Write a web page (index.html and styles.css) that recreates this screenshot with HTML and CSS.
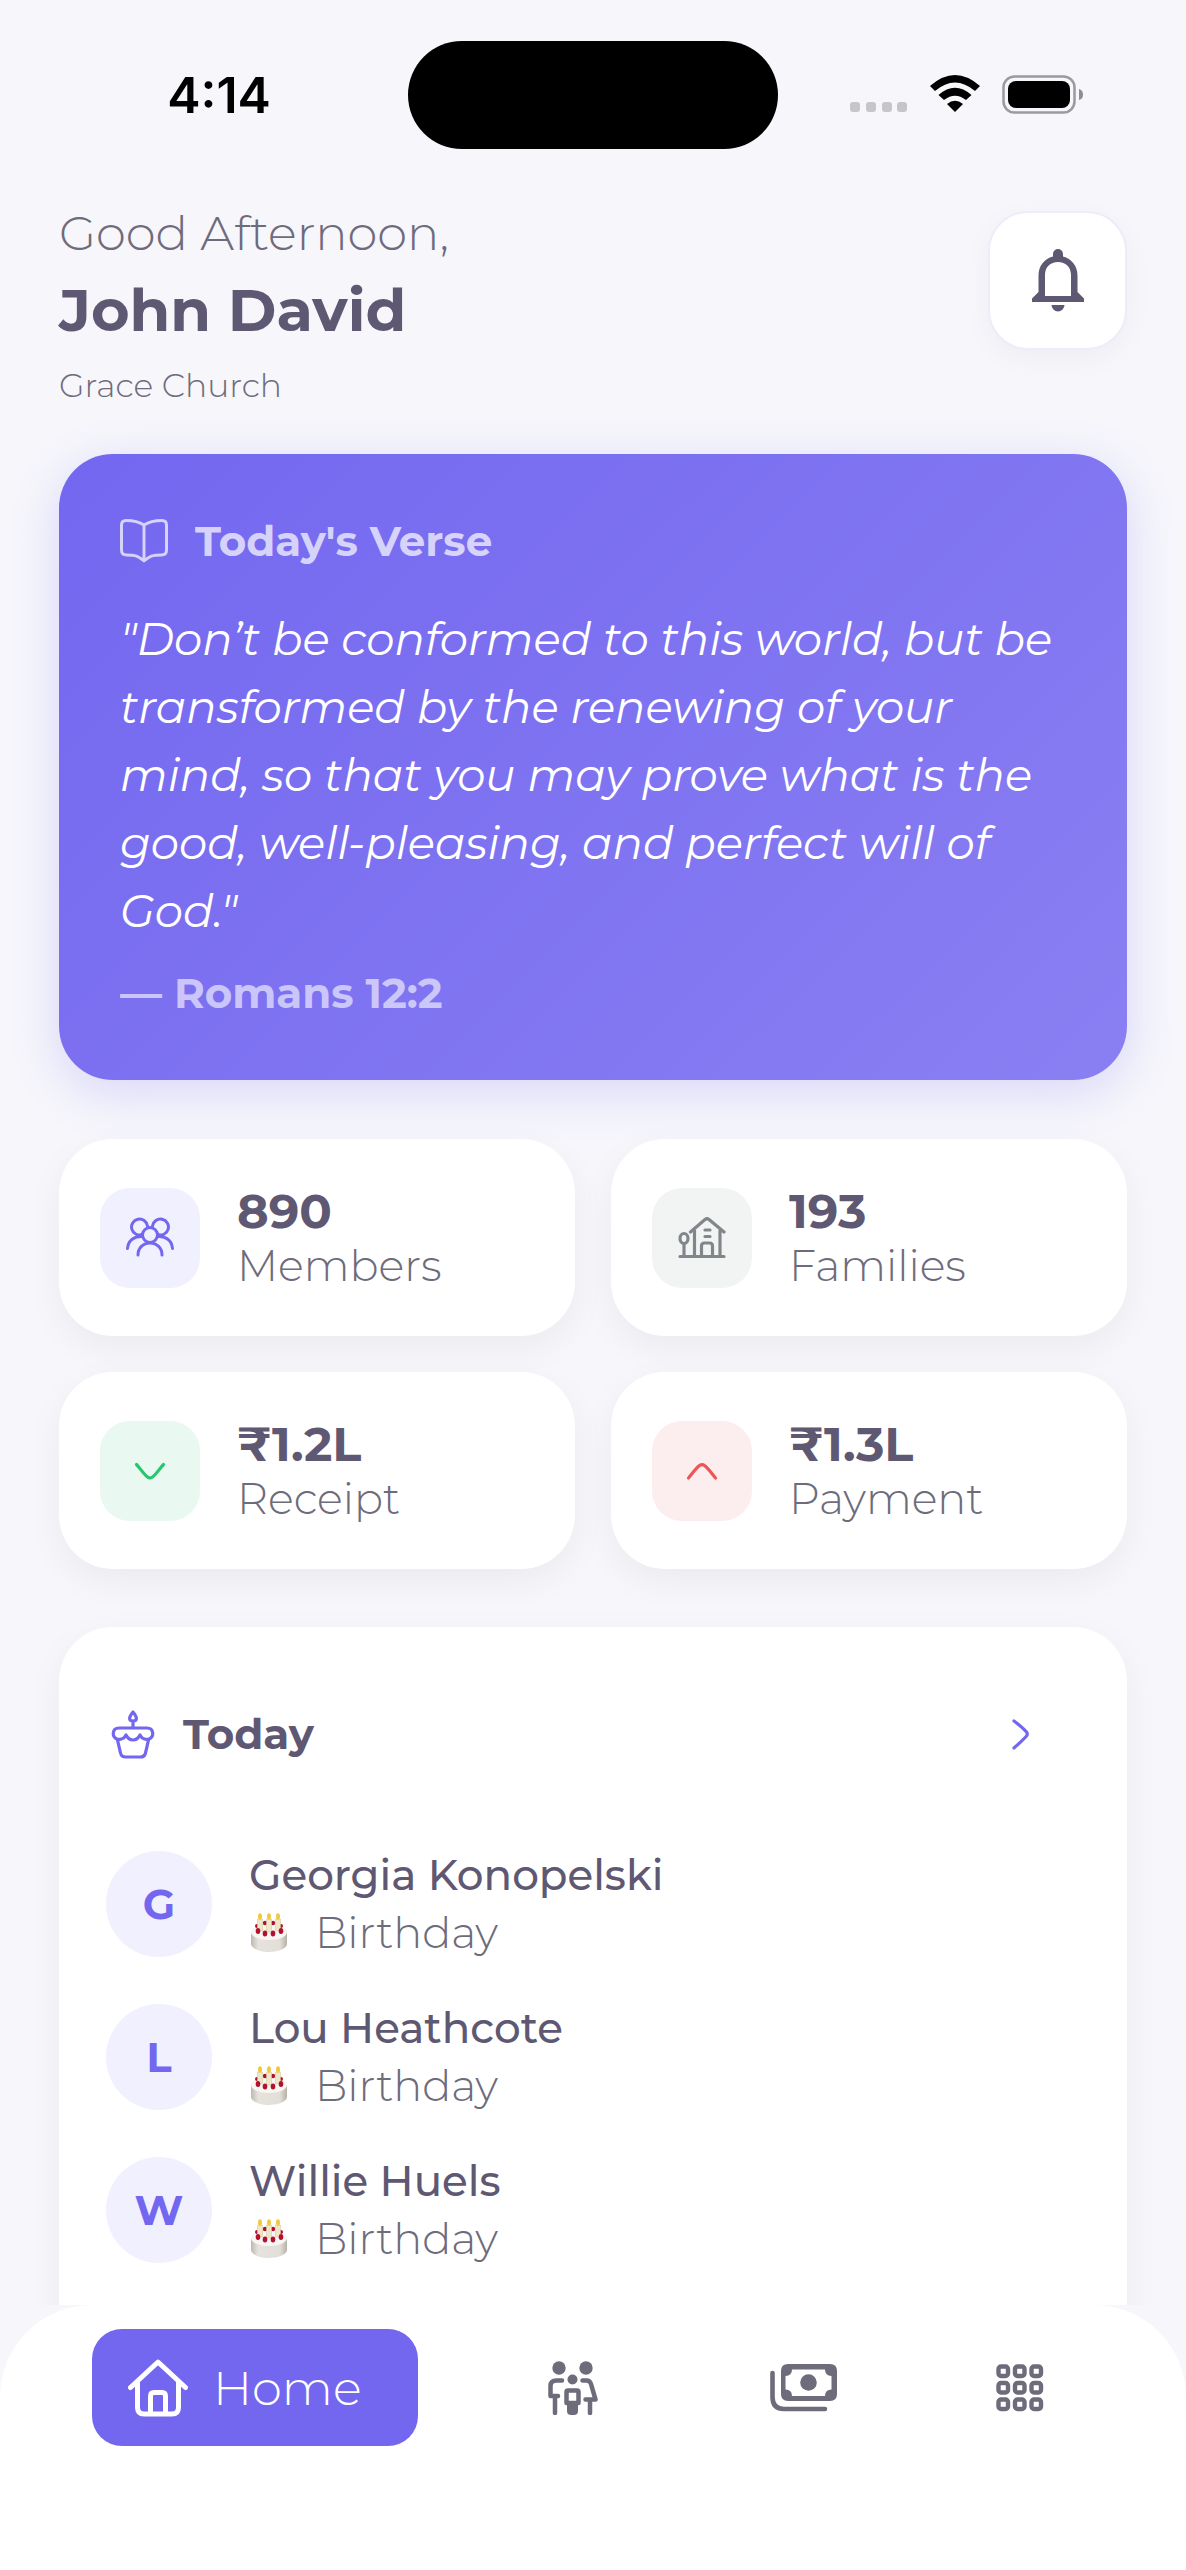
FILE: index.html
```html
<!DOCTYPE html>
<html lang="en">
<head>
<meta charset="utf-8">
<meta name="viewport" content="width=device-width, initial-scale=1">
<title>Grace Church</title>
<link rel="stylesheet" href="styles.css">
</head>
<body>
<svg class="defs" aria-hidden="true">
  <defs>
    <linearGradient id="cake-side" x1="0" x2="1" y1="0" y2="0">
      <stop offset="0" stop-color="#bdb9b0"/><stop offset=".2" stop-color="#e6e3dd"/><stop offset=".8" stop-color="#e2dfd8"/><stop offset="1" stop-color="#b5b1a8"/>
    </linearGradient>
    <symbol id="cake" viewBox="0 0 40 40">
      <path d="M2 19v12c0 4 8 8 18 8s18-4 18-8V19z" fill="url(#cake-side)"/>
      <ellipse cx="20" cy="19" rx="18" ry="8" fill="#f7f6f3"/>
      <g fill="#b3122f"><circle cx="8" cy="13" r="2"/><circle cx="16" cy="10" r="2.200"/><circle cx="24" cy="10" r="2.200"/><circle cx="32" cy="13" r="2"/></g>
      <g fill="#eee6c8" stroke="#cfc59d" stroke-width=".5"><path d="M8.500 6h5v12h-5zM17.500 6h5v13h-5zM26.500 6h5v12h-5z"/></g>
      <g fill="#b3122f"><ellipse cx="9" cy="18" rx="2.300" ry="3"/><ellipse cx="16" cy="20.500" rx="2.300" ry="3"/><ellipse cx="24" cy="20.500" rx="2.300" ry="3"/><ellipse cx="32" cy="18" rx="2.300" ry="3"/></g>
      <g fill="#f2c83c"><ellipse cx="11" cy="3.500" rx="2" ry="3.200"/><ellipse cx="20" cy="3.500" rx="2" ry="3.200"/><ellipse cx="29" cy="3.500" rx="2" ry="3.200"/></g>
    </symbol>
  </defs>
</svg>

<div class="app">
  <main class="screen">
    <div class="status">
      <span class="status-time">4:14</span>
      <span class="island"></span>
      <div class="status-icons">
        <svg class="i-dots" viewBox="0 0 58 38" aria-hidden="true"><g fill="#c6c6c9"><rect y="27" width="10" height="10" rx="3"/><rect x="16" y="27" width="10" height="10" rx="3"/><rect x="32" y="27" width="10" height="10" rx="3"/><rect x="47" y="27" width="10" height="10" rx="3"/></g></svg>
        <svg class="i-wifi" viewBox="0 0 50 38" aria-hidden="true"><path d="M0 11Q25-11 50 11L45 16Q25-1 5 16ZM8.500 20Q25 5.500 41.500 20L36 25Q25 16.500 14 25ZM17 29Q25 22.500 33 29L25 37Z"/></svg>
        <svg class="i-battery" viewBox="0 0 82 40" aria-hidden="true"><rect x="1.500" y="1.500" width="71" height="36" rx="11" fill="none" stroke="#9b9b9e" stroke-width="2.500"/><rect x="6" y="6" width="62" height="27" rx="8"/><path d="M77 14q4 1 4 5.500t-4 5.500z" fill="#8e8e91"/></svg>
      </div>
    </div>

    <header class="header">
      <div>
        <p class="greeting">Good Afternoon,</p>
        <h1 class="name">John David</h1>
        <p class="church">Grace Church</p>
      </div>
      <button class="bell" type="button" aria-label="Notifications">
        <svg viewBox="0 0 52 63" aria-hidden="true"><path fill-rule="evenodd" fill="#5e5873" d="M26 0a5 5 0 0 1 5 5v2.500C39.500 9.500 45.500 17 45.500 26.500V43L52 49.500V53H0v-3.500L6.500 43V26.500C6.500 17 12.500 9.500 21 7.500V5a5 5 0 0 1 5-5zM13 47h26V26c0-8-5.500-13-13-13s-13 5-13 13zM19.500 56h13a6.500 6.500 0 0 1-13 0z"/></svg>
      </button>
    </header>

    <section class="verse">
      <h2 class="verse-title">
        <svg viewBox="0 0 48 44" fill="none" stroke="#fff" stroke-width="3" stroke-linejoin="round" aria-hidden="true"><path d="M24 6C18 2 12 1.500 6 1.500Q1.500 1.500 1.500 6v25q0 5 5 5c9 0 12 1 17.500 6 5.500-5 8.500-6 17.500-6q5 0 5-5V6q0-4.500-4.500-4.500c-6 0-12 .5-18 4.500zV42"/></svg>
        Today's Verse
      </h2>
      <blockquote class="verse-text">"Don’t be conformed to this world, but be transformed by the renewing of your mind, so that you may prove what is the good, well-pleasing, and perfect will of God."</blockquote>
      <p class="verse-ref">— Romans 12:2</p>
    </section>

    <section class="stats" aria-label="Summary">
      <article class="stat">
        <span class="tile tile-members"><svg viewBox="0 0 48 48" fill="none" stroke="#7367f0" stroke-width="3" stroke-linecap="round" aria-hidden="true"><circle cx="24" cy="21" r="7.500"/><path d="M12 41c0-7 5-12 12-12s12 5 12 12M16.500 20.500A8 8 0 1 1 21.500 12M31.500 20.500A8 8 0 1 0 26.500 12M15.500 22.500C7.500 22 2 27.500 1.500 34.500M32.500 22.500C40.500 22 46 27.500 46.500 34.500"/></svg></span>
        <div><p class="stat-value">890</p><p class="stat-label">Members</p></div>
      </article>
      <article class="stat">
        <span class="tile tile-families"><svg viewBox="0 0 48 48" fill="none" stroke="#82868b" stroke-width="3.200" stroke-linecap="round" stroke-linejoin="round" aria-hidden="true"><path d="M2 42.500h44M16.500 42V16M42 42V16M12.500 18L27 5.500q2-1.500 4 0L46 18M23.500 42V32q0-3 3-3h5q3 0 3 3v10M27 16h5M27 22.500h5M6 42V30"/><ellipse cx="6" cy="24.500" rx="4" ry="5"/></svg></span>
        <div><p class="stat-value">193</p><p class="stat-label">Families</p></div>
      </article>
      <article class="stat">
        <span class="tile tile-receipt"><svg viewBox="0 0 48 48" fill="none" stroke="#28c76f" stroke-width="3.200" stroke-linecap="round" aria-hidden="true"><path d="M10.500 17.500C14 21 17.500 27 21.500 30q2.500 1.800 5 0c4-3 7.500-9 11-12.500"/></svg></span>
        <div><p class="stat-value">₹1.2L</p><p class="stat-label">Receipt</p></div>
      </article>
      <article class="stat">
        <span class="tile tile-payment"><svg viewBox="0 0 48 48" fill="none" stroke="#f05455" stroke-width="3.200" stroke-linecap="round" aria-hidden="true"><path d="M10.500 31C14 27 17.500 21.500 21.500 18.500q2.500-1.800 5 0c4 3 7.500 8.500 11 12.500"/></svg></span>
        <div><p class="stat-value">₹1.3L</p><p class="stat-label">Payment</p></div>
      </article>
    </section>

    <section class="today">
      <div class="today-head">
        <svg viewBox="0 0 54 54" fill="none" stroke="#7367f0" stroke-width="3.200" stroke-linecap="round" stroke-linejoin="round" aria-hidden="true"><path d="M27 5c4.500 5.500 4.500 8.500 0 9-4.500-.5-4.500-3.500 0-9zM27 15v6M13 21h28c7 0 7.500 9 2 11-3 1-7 0-9-4-2 4-4 5-7 5s-5-1-7-5c-2 4-6 5-9 4-5.500-2-5-11 2-11zM11.500 33l3 13q1 4 5 4h15q4 0 5-4l3-13"/></svg>
        <h2 class="today-title">Today</h2>
        <button class="more" type="button" aria-label="View all">
          <svg viewBox="0 0 54 54" fill="none" stroke="#7367f0" stroke-width="3.200" stroke-linecap="round" aria-hidden="true"><path d="M20 14C24 17 29 21 32.500 25q1.500 2 0 4C29 33 24 37.500 20 41"/></svg>
        </button>
      </div>
      <ul class="people">
        <li class="person"><span class="avatar">G</span><div><p class="person-name">Georgia Konopelski</p><p class="event"><svg aria-hidden="true"><use href="#cake"/></svg>Birthday</p></div></li>
        <li class="person"><span class="avatar">L</span><div><p class="person-name">Lou Heathcote</p><p class="event"><svg aria-hidden="true"><use href="#cake"/></svg>Birthday</p></div></li>
        <li class="person"><span class="avatar">W</span><div><p class="person-name">Willie Huels</p><p class="event"><svg aria-hidden="true"><use href="#cake"/></svg>Birthday</p></div></li>
      </ul>
    </section>
  </main>

  <nav class="tabs" aria-label="Main">
    <a class="tab tab-active" href="#home" aria-current="page">
      <svg class="i-home" viewBox="0 0 60 58" fill="none" stroke="#fff" stroke-width="5" stroke-linecap="round" stroke-linejoin="round" aria-hidden="true"><path d="M2.500 28.500L30 3l27.500 25.500M9.500 24v24.500q0 6.500 6.500 6.500h28q6.500 0 6.500-6.500V24M22.500 55V37q0-3.500 3.500-3.500h8q3.500 0 3.500 3.500v18"/></svg>
      Home
    </a>
    <a class="tab" href="#families" aria-label="Families">
      <svg class="i-family" viewBox="0 0 50 54" fill="none" stroke="#6e6b7b" stroke-width="4.500" stroke-linecap="round" stroke-linejoin="round" aria-hidden="true"><g fill="#6e6b7b" stroke="none"><circle cx="11" cy="7" r="6.700"/><circle cx="38" cy="7" r="6.700"/><circle cx="24.500" cy="18.500" r="5"/><path d="M19 42h11v8q0 4-4 4h-3q-4 0-4-4z"/></g><path d="M14 19.500H8.500Q2.500 19.500 2.500 25v10H10M7 36v16M34.500 19.500h4Q42 19.500 43 23l4.500 15.500H37.500M42 39v13M20 29.500h9q1.500 0 1.500 1.500v11h-12V31q0-1.500 1.500-1.500z"/></svg>
    </a>
    <a class="tab" href="#finance" aria-label="Finance">
      <svg class="i-money" viewBox="0 0 67 48" aria-hidden="true"><path d="M2.500 9v24Q2.500 45 14 45h41" fill="none" stroke="#6e6b7b" stroke-width="4.600" stroke-linecap="round"/><path fill-rule="evenodd" fill="#6e6b7b" d="M18 0h42q7 0 7 7v23q0 7-7 7H18q-7 0-7-7V7q0-7 7-7zM22 5.500q0 6.500-6.500 6.500v13.500q6.500 0 6.500 6.500h33q0-6.500 6.500-6.500V12q-6.500 0-6.500-6.500z"/><circle cx="38.500" cy="18.500" r="8.300" fill="#6e6b7b"/></svg>
    </a>
    <a class="tab" href="#more" aria-label="More">
      <svg class="i-grid" viewBox="0 0 48 48" fill="none" stroke="#6e6b7b" stroke-width="4.400" aria-hidden="true"><g id="grid-row"><rect x="2.500" y="2.500" width="9.500" height="9.500" rx="2.500"/><rect x="19" y="2.500" width="9.500" height="9.500" rx="2.500"/><rect x="35.500" y="2.500" width="9.500" height="9.500" rx="2.500"/></g><use href="#grid-row" y="16.500"/><use href="#grid-row" y="33"/></svg>
    </a>
  </nav>
</div>
</body>
</html>
```
FILE: styles.css
```css
* { box-sizing: border-box; }

body {
  margin: 0;
  background: #f6f6fb;
  color: #5e5873;
  font-family: Montserrat, Inter, "Noto Sans", sans-serif;
  font-size: 42px;
}

h1, h2, p, ul, blockquote { margin: 0; padding: 0; font-weight: inherit; }
button { border: 0; padding: 0; background: none; cursor: pointer; }
svg { display: block; flex: none; }
.defs { position: absolute; width: 0; height: 0; }

.app {
  display: flex;
  flex-direction: column;
  height: 100vh;
}

.screen {
  flex: 1;
  min-height: 0;
  overflow-y: auto;
  scrollbar-width: none;
  padding: 0 59px;
}

/* Status bar */
.status {
  display: grid;
  grid-template-columns: 1fr 370px 1fr;
  align-items: center;
  margin: 0 -59px;
  padding: 41px 30px 54px;
}
.status-time {
  justify-self: center;
  color: #000;
  font-family: Inter, sans-serif;
  font-size: 50px;
  font-weight: 600;
}
.island { height: 108px; border-radius: 54px; background: #000; }
.status-icons {
  display: flex;
  justify-content: center;
  gap: 22px;
}
.i-dots { width: 58px; height: 38px; }
.i-wifi { width: 50px; height: 38px; }
.i-battery { width: 82px; height: 40px; }

/* Greeting */
.header {
  display: flex;
  align-items: flex-start;
  justify-content: space-between;
  margin-bottom: 41px;
}
.greeting { font-size: 48px; line-height: 60px; font-weight: 300; color: #6e6b7b; }
.name { font-size: 59px; line-height: 94px; font-weight: 700; }
.church { font-size: 33px; line-height: 56px; font-weight: 300; color: #6e6b7b; }
.bell {
  display: grid;
  place-items: center;
  width: 139px;
  height: 139px;
  margin-top: 8px;
  border: 2px solid #ebedfa;
  border-radius: 40px;
  background: #fff;
  box-shadow: 0 8px 30px rgba(0, 0, 0, .04);
}
.bell svg { width: 52px; height: 63px; }

/* Verse of the day */
.verse {
  margin-bottom: 59px;
  padding: 61px;
  border-radius: 54px;
  background: linear-gradient(135deg, #7367f0, #8a7ff2);
  box-shadow: 0 12px 48px rgba(115, 103, 240, .22);
  color: #fff;
}
.verse-title {
  display: flex;
  align-items: center;
  gap: 27px;
  font-size: 42px;
  line-height: 52px;
  font-weight: 700;
  opacity: .7;
}
.verse-title svg { width: 48px; height: 44px; }
.verse-text {
  margin: 38px 0 22px;
  font-size: 45px;
  line-height: 68px;
  font-weight: 400;
  font-style: italic;
}
.verse-ref { line-height: 52px; font-weight: 700; opacity: .6; }

/* Summary cards */
.stats {
  display: grid;
  grid-template-columns: 1fr 1fr;
  gap: 36px;
  margin-bottom: 58px;
}
.stat {
  display: flex;
  align-items: center;
  gap: 37px;
  min-height: 197px;
  padding: 0 41px;
  border-radius: 54px;
  background: #fff;
  box-shadow: 0 12px 36px rgba(0, 0, 0, .05);
}
.tile {
  display: grid;
  place-items: center;
  width: 100px;
  height: 100px;
  border-radius: 30px;
}
.tile svg { width: 48px; height: 48px; }
.tile-members { background: #f1f0fe; }
.tile-families { background: #f2f4f4; }
.tile-receipt { background: #e9f8f1; }
.tile-payment { background: #fceeee; }
.stat-value { font-size: 48px; line-height: 56px; font-weight: 700; }
.stat-label { font-size: 43px; line-height: 54px; font-weight: 300; color: #6e6b7b; }

/* Today's events */
.today {
  padding: 57px 47px 118px;
  border-radius: 54px;
  background: #fff;
  box-shadow: 0 12px 36px rgba(0, 0, 0, .05);
}
.today-head {
  display: flex;
  align-items: center;
  gap: 23px;
  height: 100px;
  margin-bottom: 62px;
  padding-right: 32px;
}
.today-head svg { width: 54px; height: 54px; }
.today-title { flex: 1; font-size: 42px; line-height: 58px; font-weight: 700; }
.people { display: grid; gap: 37px; list-style: none; }
.person { display: flex; align-items: center; gap: 37px; }
.avatar {
  display: grid;
  place-items: center;
  width: 106px;
  height: 106px;
  border-radius: 50%;
  background: #f1f0fe;
  color: #7367f0;
  font-weight: 700;
}
.person-name { line-height: 58px; font-weight: 500; }
.event {
  display: flex;
  align-items: center;
  gap: 26px;
  font-size: 43px;
  line-height: 58px;
  font-weight: 300;
  color: #6e6b7b;
}
.event svg { width: 40px; height: 40px; }

/* Bottom tabs */
.tabs {
  display: grid;
  grid-template-columns: 366fr 230fr 231fr 201fr;
  align-items: start;
  padding: 24px 66px 124px 92px;
  border-radius: 92px 92px 0 0;
  background: #fff;
}
.tab {
  display: flex;
  align-items: center;
  justify-content: center;
  height: 117px;
  color: inherit;
  text-decoration: none;
}
.tab-active {
  justify-self: start;
  gap: 25px;
  padding: 0 56px 0 36px;
  border-radius: 30px;
  background: #7367f0;
  color: #fff;
  font-size: 48px;
  font-weight: 300;
}
.i-home { width: 60px; height: 58px; }
.i-family { width: 50px; height: 54px; }
.i-money { width: 67px; height: 48px; }
.i-grid { width: 48px; height: 48px; }
```
